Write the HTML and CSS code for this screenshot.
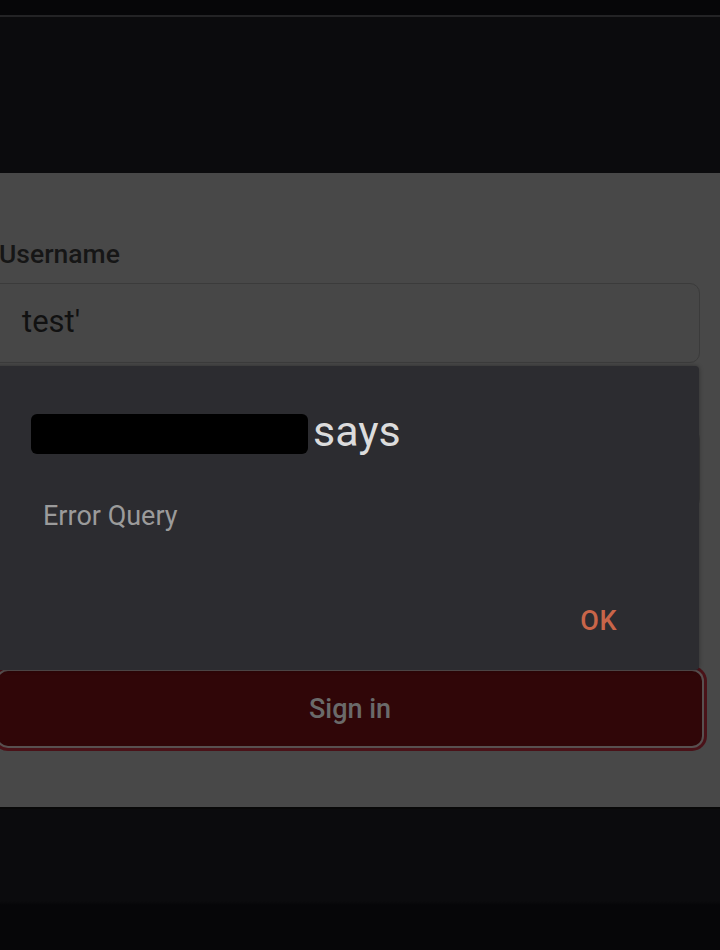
FILE: index.html
```html
<!DOCTYPE html>
<html lang="en">
<head>
<meta charset="utf-8">
<title>Sign in</title>
<link rel="stylesheet" href="styles.css">
</head>
<body>
<div class="screen">
  <div class="statusbar"></div>
  <div class="header"></div>
  <main class="panel">
    <form class="form">
      <label class="label">Username</label>
      <div class="input">test'</div>
      <div class="input input-hidden"></div>
      <button type="button" class="signin">Sign in</button>
    </form>
  </main>
  <div class="footer"></div>

  <div class="dialog">
    <div class="dialog-title"><span class="redact"></span><span class="says">says</span></div>
    <div class="dialog-msg">Error Query</div>
    <div class="dialog-actions"><span class="ok">OK</span></div>
  </div>
</div>
</body>
</html>
```
FILE: styles.css
```css
* { box-sizing: border-box; }
html, body { margin: 0; padding: 0; }
body {
  width: 720px;
  height: 950px;
  overflow: hidden;
  background: #060608;
  font-family: Roboto, "Noto Sans", sans-serif;
}
.screen {
  position: relative;
  width: 720px;
  height: 950px;
  overflow: hidden;
  display: flex;
  flex-direction: column;
}
.statusbar {
  height: 17px;
  background: #060608;
  border-bottom: 2px solid #232325;
  flex: none;
}
.header {
  height: 156px;
  background: #0b0b0d;
  flex: none;
}
.panel {
  height: 636px;
  background: #484848;
  border-bottom: 2px solid #080808;
  flex: none;
}
.form {
  margin-left: -20px;
  width: 720px;
  padding-top: 66px;
  display: flex;
  flex-direction: column;
}
.label {
  font-size: 26.5px;
  font-weight: 500;
  line-height: 30px;
  color: #161616;
  padding-left: 19px;
}
.input {
  margin-top: 14px;
  height: 80px;
  border: 1px solid #3b3b3b;
  border-radius: 10px;
  background: #474747;
  padding-left: 41px;
  font-size: 31px;
  line-height: 76px;
  color: #111111;
  flex: none;
}
.input-hidden { margin-top: 66px; }
.signin {
  flex: none;
  margin-top: 162px;
  margin-left: 18px;
  width: 704px;
  height: 75px;
  border: none;
  border-radius: 10px;
  background: #300608;
  box-shadow: 0 0 0 2px #585050, 0 0 0 5px #4a1218;
  color: #6a6a6a;
  font-family: Roboto, "Noto Sans", sans-serif;
  font-size: 27px;
  font-weight: 500;
  padding: 0;
}
.footer {
  flex: 1;
  background: linear-gradient(#0b0b0d 0, #0b0b0d 92px, #060608 96px);
}
.dialog {
  position: absolute;
  top: 366px;
  left: -30px;
  width: 729px;
  height: 304px;
  background: #2c2c30;
  border-radius: 4px;
  box-shadow: 0 0 4px rgba(0,0,0,0.35);
  display: flex;
  flex-direction: column;
}
.dialog-title {
  margin-top: 42px;
  padding-left: 61px;
  display: flex;
  align-items: center;
  height: 52px;
}
.redact {
  display: block;
  width: 277px;
  height: 40px;
  background: #000;
  border-radius: 6px;
}
.says {
  margin-left: 5px;
  font-size: 43px;
  line-height: 52px;
  margin-top: -6px;
  color: #dcdcdc;
}
.dialog-msg {
  margin-top: 40px;
  padding-left: 73px;
  font-size: 27px;
  line-height: 32px;
  color: #9b9b9b;
}
.dialog-actions {
  margin-top: 74px;
  display: flex;
  justify-content: flex-end;
  padding-right: 82px;
}
.ok {
  font-size: 27px;
  font-weight: 500;
  line-height: 30px;
  color: #c96549;
  letter-spacing: 0.5px;
}
```
